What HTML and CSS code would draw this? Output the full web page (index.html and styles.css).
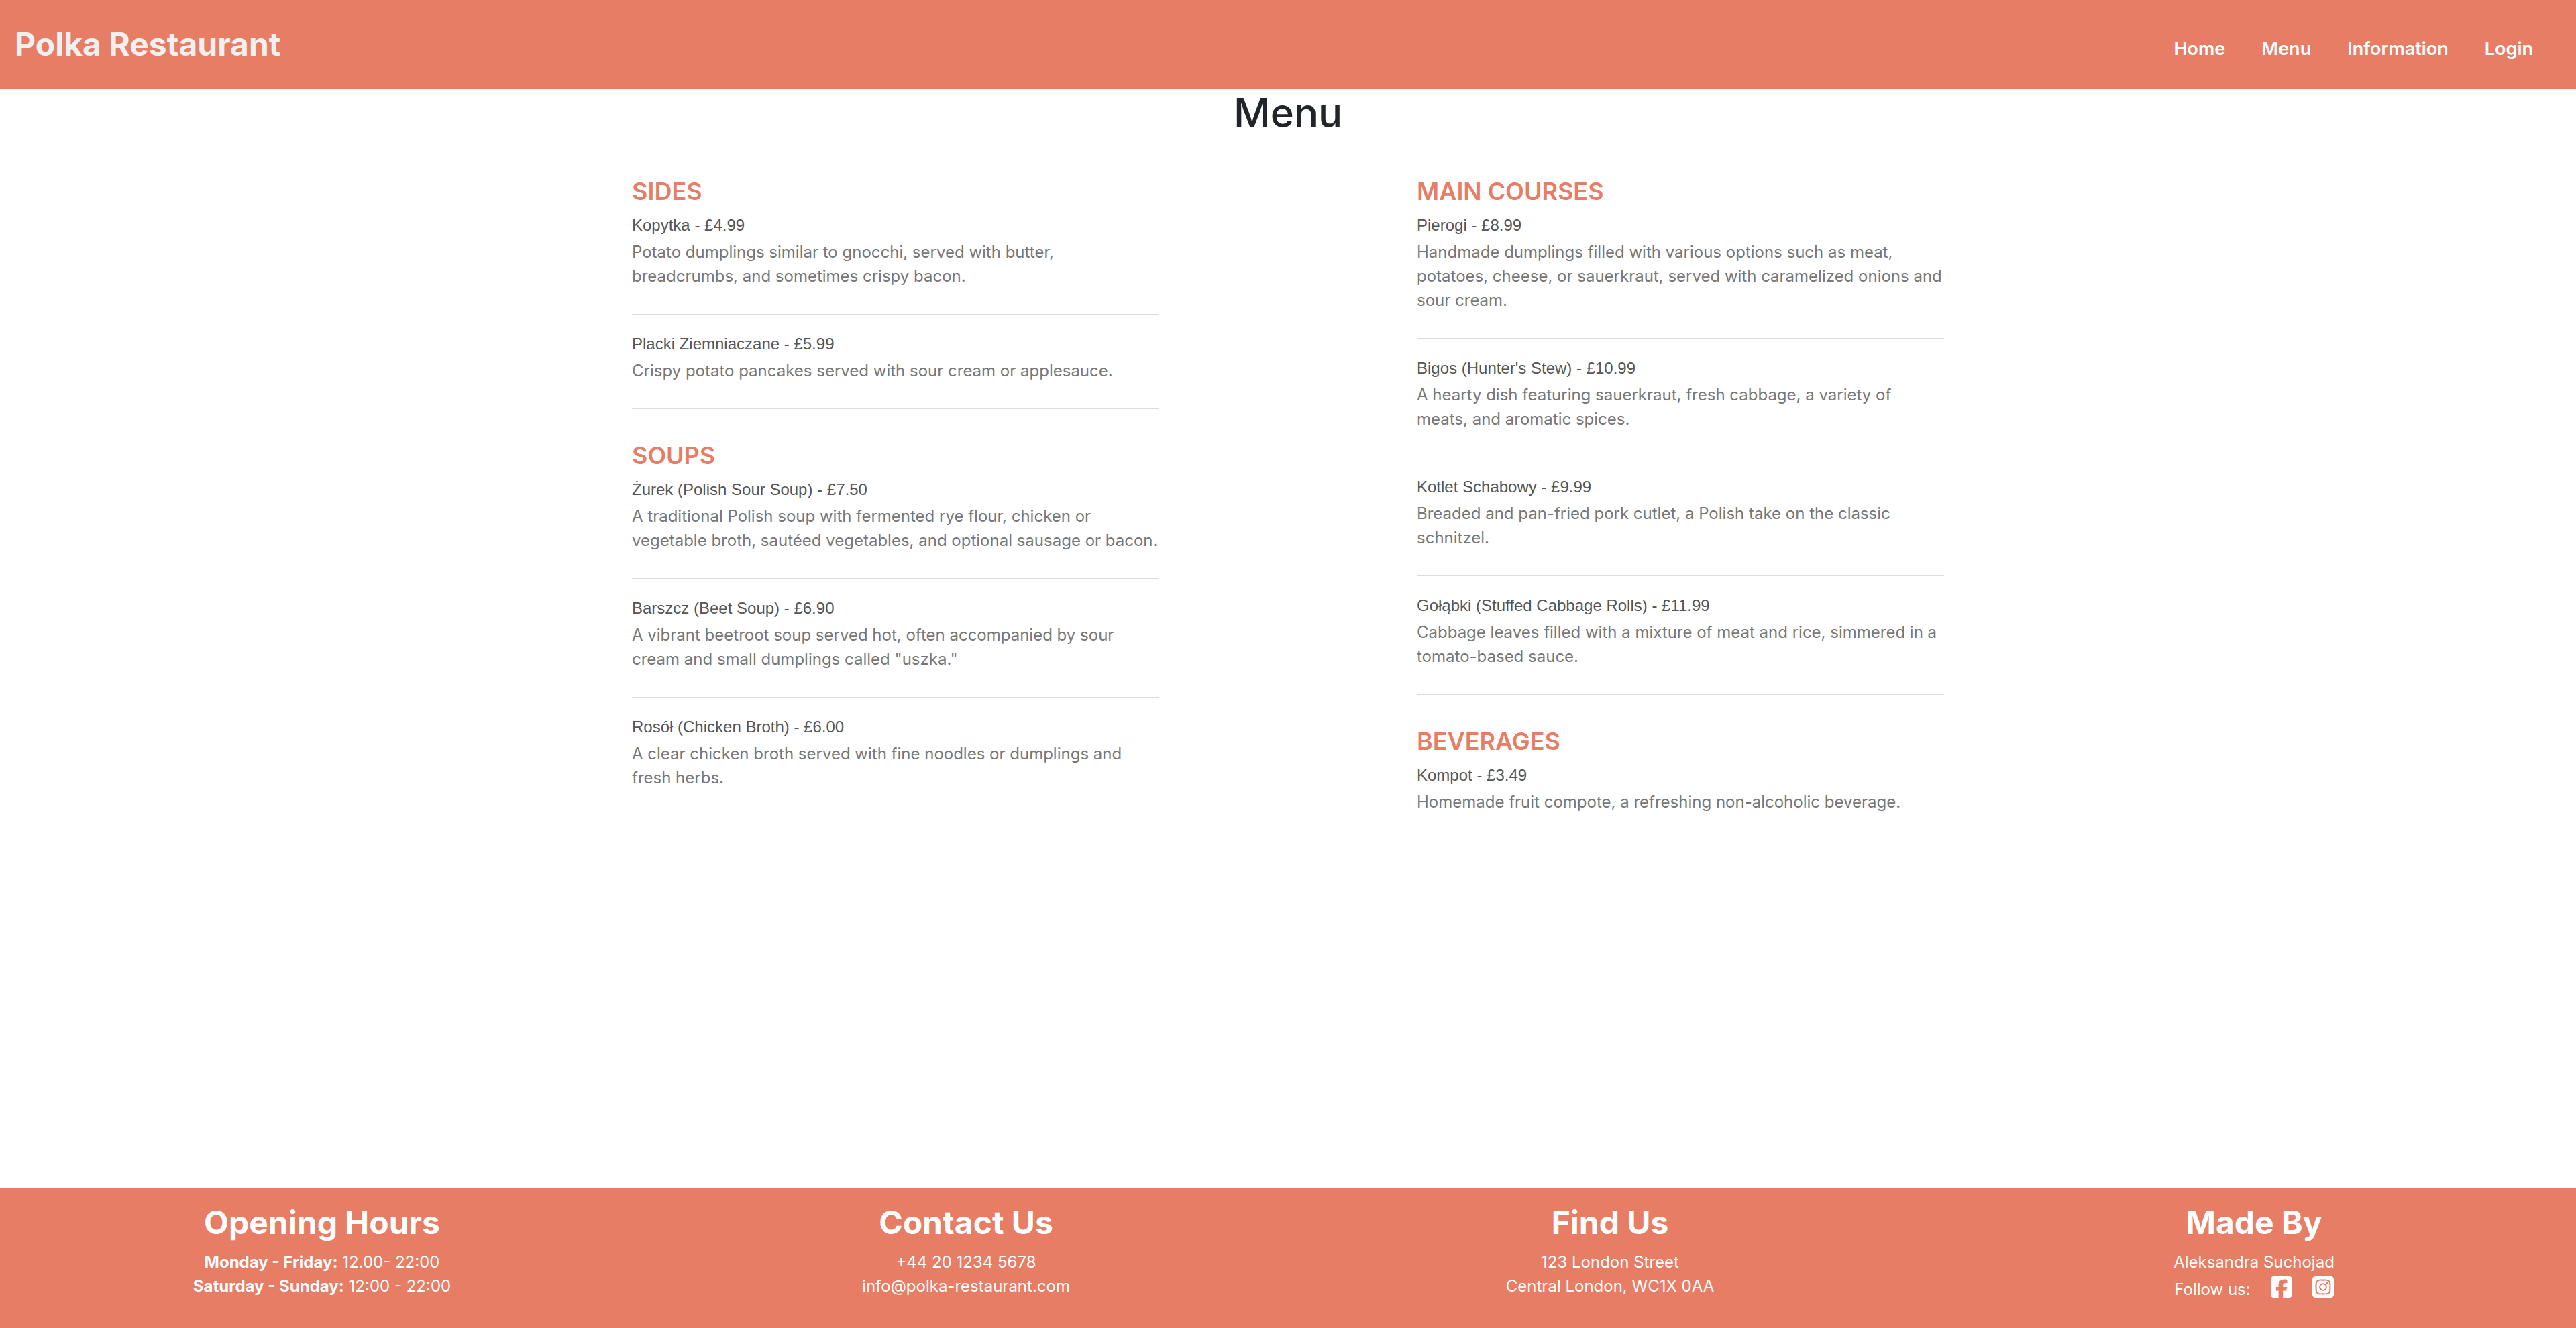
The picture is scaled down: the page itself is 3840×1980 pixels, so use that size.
FILE: index.html
```html
<!DOCTYPE html>
<html lang="en">
<head>
<meta charset="utf-8">
<meta name="viewport" content="width=device-width, initial-scale=1">
<title>Menu - Polka Restaurant</title>
<link rel="stylesheet" href="styles.css">
</head>
<body>
<header class="navbar">
  <a class="brand" href="#">Polka Restaurant</a>
  <nav class="nav-links">
    <a href="#">Home</a>
    <a href="#">Menu</a>
    <a href="#">Information</a>
    <a href="#">Login</a>
  </nav>
</header>
<main class="content">
  <h1 class="page-title">Menu</h1>
  <div class="menu">
    <div class="menu-column">
      <section>
        <h2 class="category">SIDES</h2>
        <ul class="dishes">
          <li class="dish">
            <h3 class="dish-name">Kopytka - £4.99</h3>
            <p class="dish-text">Potato dumplings similar to gnocchi, served with butter, breadcrumbs, and sometimes crispy bacon.</p>
          </li>
          <li class="dish">
            <h3 class="dish-name">Placki Ziemniaczane - £5.99</h3>
            <p class="dish-text">Crispy potato pancakes served with sour cream or applesauce.</p>
          </li>
        </ul>
      </section>
      <section>
        <h2 class="category">SOUPS</h2>
        <ul class="dishes">
          <li class="dish">
            <h3 class="dish-name">Żurek (Polish Sour Soup) - £7.50</h3>
            <p class="dish-text">A traditional Polish soup with fermented rye flour, chicken or vegetable broth, sautéed vegetables, and optional sausage or bacon.</p>
          </li>
          <li class="dish">
            <h3 class="dish-name">Barszcz (Beet Soup) - £6.90</h3>
            <p class="dish-text">A vibrant beetroot soup served hot, often accompanied by sour cream and small dumplings called "uszka."</p>
          </li>
          <li class="dish">
            <h3 class="dish-name">Rosół (Chicken Broth) - £6.00</h3>
            <p class="dish-text">A clear chicken broth served with fine noodles or dumplings and fresh herbs.</p>
          </li>
        </ul>
      </section>
    </div>
    <div class="menu-column">
      <section>
        <h2 class="category">MAIN COURSES</h2>
        <ul class="dishes">
          <li class="dish">
            <h3 class="dish-name">Pierogi - £8.99</h3>
            <p class="dish-text">Handmade dumplings filled with various options such as meat, potatoes, cheese, or sauerkraut, served with caramelized onions and sour cream.</p>
          </li>
          <li class="dish">
            <h3 class="dish-name">Bigos (Hunter's Stew) - £10.99</h3>
            <p class="dish-text">A hearty dish featuring sauerkraut, fresh cabbage, a variety of meats, and aromatic spices.</p>
          </li>
          <li class="dish">
            <h3 class="dish-name">Kotlet Schabowy - £9.99</h3>
            <p class="dish-text">Breaded and pan-fried pork cutlet, a Polish take on the classic schnitzel.</p>
          </li>
          <li class="dish">
            <h3 class="dish-name">Gołąbki (Stuffed Cabbage Rolls) - £11.99</h3>
            <p class="dish-text">Cabbage leaves filled with a mixture of meat and rice, simmered in a tomato-based sauce.</p>
          </li>
        </ul>
      </section>
      <section>
        <h2 class="category">BEVERAGES</h2>
        <ul class="dishes">
          <li class="dish">
            <h3 class="dish-name">Kompot - £3.49</h3>
            <p class="dish-text">Homemade fruit compote, a refreshing non-alcoholic beverage.</p>
          </li>
        </ul>
      </section>
    </div>
  </div>
</main>
<footer class="footer">
  <section>
    <h2 class="footer-title">Opening Hours</h2>
    <p><strong>Monday - Friday:</strong> 12.00- 22:00</p>
    <p><strong>Saturday - Sunday:</strong> 12:00 - 22:00</p>
  </section>
  <section>
    <h2 class="footer-title">Contact Us</h2>
    <p>+44 20 1234 5678</p>
    <p>info@polka-restaurant.com</p>
  </section>
  <section>
    <h2 class="footer-title">Find Us</h2>
    <p>123 London Street</p>
    <p>Central London, WC1X 0AA</p>
  </section>
  <section>
    <h2 class="footer-title">Made By</h2>
    <p>Aleksandra Suchojad</p>
    <p class="social">
      <span>Follow us:</span>
      <a href="#" aria-label="Facebook"><svg class="social-icon" viewBox="0 32 448 448" aria-hidden="true"><path d="M64 32C28.700 32 0 60.700 0 96V416c0 35.300 28.700 64 64 64h98.200V334.200H109.400V256h52.800V222.300c0-87.100 39.400-127.500 125-127.500c16.200 0 44.200 3.200 55.700 6.400V172c-6-.6-16.500-1-29.600-1c-42 0-58.200 15.900-58.200 57.200V256h83.600l-14.400 78.200H255V480H384c35.300 0 64-28.700 64-64V96c0-35.300-28.700-64-64-64H64z"/></svg></a>
      <a href="#" aria-label="Instagram"><svg class="social-icon" viewBox="0 32 448 448" aria-hidden="true"><path d="M194.400 211.700a53.300 53.300 0 1 0 59.300 88.700 53.300 53.300 0 1 0-59.300-88.700zm142.300-68.400c-5.200-5.200-11.500-9.300-18.400-12c-18.100-7.100-57.600-6.800-83.100-6.500c-4.100 0-7.900 .1-11.200 .1s-7.200 0-11.400-.1c-25.500-.3-64.800-.7-82.900 6.500c-6.900 2.700-13.100 6.800-18.400 12s-9.300 11.500-12 18.400c-7.100 18.100-6.700 57.700-6.500 83.200c0 4.100 .1 7.900 .1 11.100s0 7-.1 11.100c-.2 25.500-.6 65.100 6.500 83.200c2.700 6.900 6.800 13.100 12 18.400s11.500 9.300 18.400 12c18.100 7.100 57.600 6.800 83.100 6.500c4.100 0 7.900-.1 11.200-.1s7.200 0 11.400 .1c25.500 .3 64.800 .7 82.900-6.500c6.900-2.700 13.100-6.800 18.400-12s9.300-11.500 12-18.400c7.200-18 6.800-57.400 6.500-83c0-4.200-.1-8.100-.1-11.400s0-7.100 .1-11.400c.3-25.500 .7-64.900-6.500-83c-2.700-6.900-6.800-13.100-12-18.400zm-67.100 44.500A82 82 0 1 1 178.400 324.200a82 82 0 1 1 91.100-136.400zm29.200-1.300c-3.100-2.100-5.600-5.100-7.100-8.600s-1.800-7.300-1.100-11.100s2.600-7.100 5.200-9.800s6.100-4.500 9.800-5.200s7.600-.4 11.100 1.100s6.500 3.900 8.600 7s3.200 6.800 3.200 10.600c0 2.500-.5 5-1.400 7.300s-2.400 4.400-4.100 6.200s-3.900 3.200-6.200 4.200s-4.800 1.500-7.300 1.500c-3.800 0-7.500-1.100-10.600-3.200zM448 96c0-35.300-28.700-64-64-64H64C28.700 32 0 60.700 0 96V416c0 35.300 28.700 64 64 64H384c35.300 0 64-28.700 64-64V96zM357 389c-18.700 18.700-41.400 24.600-67 25.900c-26.400 1.500-105.600 1.500-132 0c-25.600-1.300-48.300-7.200-67-25.900s-24.600-41.400-25.800-67c-1.500-26.400-1.500-105.600 0-132c1.300-25.600 7.100-48.300 25.800-67s41.500-24.600 67-25.800c26.400-1.500 105.600-1.500 132 0c25.600 1.300 48.300 7.100 67 25.800s24.600 41.400 25.800 67c1.500 26.300 1.500 105.400 0 131.900c-1.300 25.600-7.100 48.300-25.800 67z"/></svg></a>
    </p>
  </section>
</footer>
</body>
</html>
```
FILE: styles.css
```css
* {
  box-sizing: border-box;
}

body {
  display: flex;
  flex-direction: column;
  min-height: 100vh;
  margin: 0;
  background: #fff;
  color: #212529;
  font-family: Inter, "Liberation Sans", sans-serif;
  font-size: 24px;
  line-height: 36px;
}

h1, h2, h3, p, ul {
  margin: 0;
  padding: 0;
}

a {
  color: inherit;
  text-decoration: none;
}

.navbar {
  display: flex;
  flex-wrap: wrap;
  align-items: flex-start;
  justify-content: space-between;
  padding: 30px 64px 30px 22px;
  background: #e77d65;
  color: #fff;
}

.brand {
  color: #f0f0f0;
  font-size: 48px;
  font-weight: 700;
  line-height: 72px;
}

.nav-links {
  display: flex;
  flex-wrap: wrap;
  gap: 54px;
  padding-top: 25px;
  font-size: 27px;
  font-weight: 600;
}

.content {
  flex: 1;
}

.page-title {
  font-size: 60px;
  font-weight: 500;
  line-height: 72px;
  text-align: center;
}

.menu {
  display: grid;
  grid-template-columns: 1fr 1fr;
  max-width: 2340px;
  margin: 0 auto;
  padding: 60px 0 48px;
}

.menu-column {
  display: flex;
  flex-direction: column;
  gap: 48px;
  padding: 0 192px;
}

.category {
  margin-bottom: 14px;
  color: #e77d65;
  font-size: 36px;
  font-weight: 600;
  line-height: 43px;
}

.dishes {
  display: flex;
  flex-direction: column;
  gap: 29px;
  list-style: none;
}

.dish {
  padding-bottom: 38px;
  border-bottom: 1px solid #ddd;
}

.dish-name {
  margin-bottom: 8px;
  color: #555;
  font-family: "Liberation Sans", Arial, sans-serif;
  font-size: 24px;
  font-weight: 400;
  line-height: 29px;
}

.dish-text {
  color: #777;
}

.footer {
  display: grid;
  grid-template-columns: repeat(4, 1fr);
  padding: 23px 0 40px;
  background: #e77d65;
  color: #fff;
  text-align: center;
}

.footer-title {
  margin-bottom: 12px;
  font-size: 48px;
  font-weight: 700;
  line-height: 58px;
}

.social {
  display: flex;
  justify-content: center;
  gap: 30px;
  height: 40px;
  line-height: 46px;
}

.social-icon {
  display: block;
  width: 32px;
  height: 32px;
  margin-top: 3px;
  fill: currentColor;
}
```
